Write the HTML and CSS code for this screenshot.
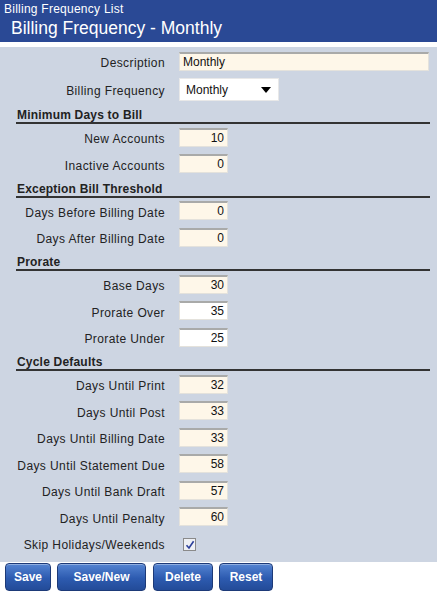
FILE: index.html
```html
<!DOCTYPE html>
<html lang="en">
<head>
  <meta charset="UTF-8">
  <title>Billing Frequency - Monthly</title>
  <link rel="stylesheet" href="styles.css">
</head>
<body>
<div class="page">
  <header class="title-bar">
    <div class="crumb">Billing Frequency List</div>
    <h1>Billing Frequency - Monthly</h1>
  </header>

  <form class="panel">
    <div class="row">
      <label>Description</label>
      <input class="txt wide" type="text" value="Monthly">
    </div>
    <div class="row row-select">
      <label>Billing Frequency</label>
      <span class="select-wrap">
        <select class="sel"><option>Monthly</option></select>
        <svg class="arrow" width="10" height="6" viewBox="0 0 10 6"><path d="M0 0h10L5 6z" fill="#000"/></svg>
      </span>
    </div>

    <h2 class="section">Minimum Days to Bill</h2>
    <div class="row"><label>New Accounts</label><input class="txt num" value="10"></div>
    <div class="row"><label>Inactive Accounts</label><input class="txt num" value="0"></div>

    <h2 class="section">Exception Bill Threshold</h2>
    <div class="row"><label>Days Before Billing Date</label><input class="txt num" value="0"></div>
    <div class="row"><label>Days After Billing Date</label><input class="txt num" value="0"></div>

    <h2 class="section">Prorate</h2>
    <div class="row"><label>Base Days</label><input class="txt num" value="30"></div>
    <div class="row"><label>Prorate Over</label><input class="txt num white" value="35"></div>
    <div class="row"><label>Prorate Under</label><input class="txt num white" value="25"></div>

    <h2 class="section">Cycle Defaults</h2>
    <div class="row"><label>Days Until Print</label><input class="txt num" value="32"></div>
    <div class="row"><label>Days Until Post</label><input class="txt num" value="33"></div>
    <div class="row"><label>Days Until Billing Date</label><input class="txt num" value="33"></div>
    <div class="row"><label>Days Until Statement Due</label><input class="txt num" value="58"></div>
    <div class="row"><label>Days Until Bank Draft</label><input class="txt num" value="57"></div>
    <div class="row"><label>Days Until Penalty</label><input class="txt num" value="60"></div>
    <div class="row">
      <label>Skip Holidays/Weekends</label>
      <span class="check">
        <svg width="10" height="10" viewBox="0 0 10 10"><path d="M1.5 5.2 4 8 8.6 1.2" fill="none" stroke="#2b3f9a" stroke-width="1.6"/></svg>
      </span>
    </div>
  </form>

  <div class="buttons">
    <button class="btn btn-save">Save</button>
    <button class="btn btn-new">Save/New</button>
    <button class="btn btn-delete">Delete</button>
    <button class="btn btn-reset">Reset</button>
  </div>
</div>
</body>
</html>
```

FILE: styles.css
```css
:root{
  --blue:#2a4995;
  --panel:#cdd5e2;
  --cream:#fef7e9;
  --text:#222;
}
*{box-sizing:border-box;margin:0;padding:0}
body{background:#fff;color:var(--text);font-family:"Liberation Sans",Arial,sans-serif;font-size:12px}
.page{width:437px}

/* header */
.title-bar{background:var(--blue);color:#fff;height:42px;padding:2px 4px 0}
.crumb{font-size:12px;line-height:15px;letter-spacing:.25px}
.title-bar h1{font-size:17.5px;font-weight:normal;line-height:22px;padding-left:7px}

/* form panel */
.panel{background:var(--panel);margin-top:5px;padding:1px 0 5px}
.row{display:grid;grid-template-columns:165px 1fr;column-gap:14px;align-items:center;height:26.5px}
.row-select{height:29px}
.row label{text-align:right;padding-top:4px;white-space:nowrap;letter-spacing:.4px}

.txt{height:19px;border:1px solid #e4e2dc;border-top:2px solid #a9aaa9;background:var(--cream);font:12px "Liberation Sans",Arial,sans-serif;color:#111;padding:0 3px}
.wide{width:250px}
.num{width:49px;text-align:right}
.white{background:#fff}

.select-wrap{position:relative;display:inline-block;width:100px;height:23px}
.sel{appearance:none;-webkit-appearance:none;width:100%;height:100%;border:1px solid #e8e8e8;background:#fff;font:12px "Liberation Sans",Arial,sans-serif;color:#111;padding:2px 6px 0}
.arrow{position:absolute;right:8px;top:9px}

.section{font-size:12px;font-weight:bold;line-height:14px;letter-spacing:.2px;margin:0 7px 0 16px;padding:4.5px 0 0 1px;border-bottom:2px solid #333}

.check{display:inline-flex;align-items:center;justify-content:center;width:13px;height:13px;margin:3px 0 0 4px;border:1px solid #8a8a8a;background:#eef0f4}

/* buttons */
.buttons{display:flex;gap:6px;padding:1px 5px}
.btn{height:28px;padding:0;border:1px solid #1d3a78;border-radius:4px;background:linear-gradient(#5484d2,#2d5bb0 55%,#234b98);color:#fff;font:bold 12px "Liberation Sans",Arial,sans-serif;box-shadow:inset 0 1px 0 rgba(255,255,255,.35)}
.btn-save{width:46px}
.btn-new{width:89px}
.btn-delete{width:60px;margin-left:1px}
.btn-reset{width:54px}
```
